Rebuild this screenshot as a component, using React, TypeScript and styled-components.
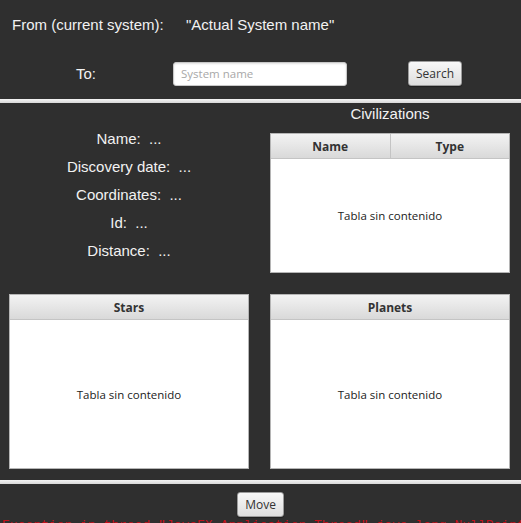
import React from "react";
import styled, { createGlobalStyle } from "styled-components";

const Global = createGlobalStyle`
  html, body { margin: 0; padding: 0; background: #2f2f2f; }
  #root { width: 521px; height: 523px; overflow: hidden; }
`;

const Window = styled.div`
  width: 521px;
  height: 523px;
  background: #2f2f2f;
  display: flex;
  flex-direction: column;
  overflow: hidden;
  font-family: "Liberation Sans", Arial, sans-serif;
  color: #f2f2f2;
  & > * { flex-shrink: 0; }
`;

const FromRow = styled.div`
  height: 48px;
  display: flex;
  align-items: center;
  padding-left: 12px;
  font-size: 15px;
`;

const FromLabel = styled.span`
  width: 174px;
`;

const ToRow = styled.div`
  height: 51px;
  display: flex;
  align-items: center;
  padding-left: 76px;
  font-size: 15px;
`;

const ToLabel = styled.span`
  width: 97px;
`;

const SearchInput = styled.input`
  box-sizing: border-box;
  width: 174px;
  height: 24px;
  border: 1px solid #c8c8c8;
  border-radius: 3px;
  background: #fff;
  box-shadow: inset 0 1px 2px rgba(0, 0, 0, 0.12);
  padding: 0 7px;
  font-family: "Open Sans", sans-serif;
  font-size: 11.5px;
  color: #333;
  outline: none;
  margin-right: 61px;
  &::placeholder { color: #a8a8a8; }
`;

const FxButton = styled.button`
  box-sizing: border-box;
  height: 25px;
  padding: 0 7px;
  border: 1px solid #9c9c9c;
  border-radius: 3px;
  background: linear-gradient(#f8f8f8, #dedede);
  box-shadow: 0 1px 1px rgba(0, 0, 0, 0.35);
  font-family: "Open Sans", sans-serif;
  font-size: 12px;
  color: #333;
  cursor: pointer;
`;

const Separator = styled.div`
  height: 4px;
  background: linear-gradient(#f4f4f4, #d8d8d8);
`;

const Main = styled.div`
  display: grid;
  grid-template-columns: 240px 240px;
  grid-template-rows: 191px 175px;
  column-gap: 21px;
  padding: 0 11px 11px 9px;
`;

const InfoList = styled.div`
  display: flex;
  flex-direction: column;
  align-items: center;
  padding-top: 22px;
  font-size: 15px;
`;

const InfoLine = styled.div`
  height: 28px;
  line-height: 28px;
  white-space: pre;
`;

const CivCell = styled.div`
  display: flex;
  flex-direction: column;
`;

const CivTitle = styled.div`
  height: 30px;
  line-height: 22px;
  text-align: center;
  font-size: 15px;
`;

const Table = styled.div<{ $h?: number }>`
  box-sizing: border-box;
  height: ${(p) => (p.$h ? `${p.$h}px` : "100%")};
  background: #fff;
  border: 1px solid #b5b5b5;
  display: flex;
  flex-direction: column;
  font-family: "Open Sans", sans-serif;
  color: #333;
`;

const HeaderRow = styled.div`
  display: flex;
  height: 24px;
  flex-shrink: 0;
  background: linear-gradient(#f3f3f3, #d9d9d9);
  border-bottom: 1px solid #c4c4c4;
`;

const HeaderCell = styled.div`
  flex: 1;
  display: flex;
  align-items: center;
  justify-content: center;
  font-size: 12px;
  font-weight: 700;
  color: #333;
  & + & { border-left: 1px solid #c4c4c4; }
`;

const Empty = styled.div`
  flex: 1;
  display: flex;
  align-items: center;
  justify-content: center;
  font-size: 11.5px;
  color: #222;
`;

const Footer = styled.div`
  display: flex;
  justify-content: center;
  padding-top: 8px;
  height: 26px;
`;

const Console = styled.div`
  font-family: "Liberation Mono", monospace;
  font-size: 13px;
  line-height: 15px;
  color: #c4101a;
  white-space: pre;
  padding-left: 2px;
`;

function DataTable({ columns, h }: { columns: string[]; h?: number }) {
  return (
    <Table $h={h}>
      <HeaderRow>
        {columns.map((c) => (
          <HeaderCell key={c}>{c}</HeaderCell>
        ))}
      </HeaderRow>
      <Empty>Tabla sin contenido</Empty>
    </Table>
  );
}

const info = ["Name:  ...", "Discovery date:  ...", "Coordinates:  ...", "Id:  ...", "Distance:  ..."];

export default function App() {
  return (
    <Window>
      <Global />
      <FromRow>
        <FromLabel>From (current system):</FromLabel>
        <span>"Actual System name"</span>
      </FromRow>
      <ToRow>
        <ToLabel>To:</ToLabel>
        <SearchInput placeholder="System name" />
        <FxButton>Search</FxButton>
      </ToRow>
      <Separator />
      <Main>
        <InfoList>
          {info.map((t) => (
            <InfoLine key={t}>{t}</InfoLine>
          ))}
        </InfoList>
        <CivCell>
          <CivTitle>Civilizations</CivTitle>
          <DataTable columns={["Name", "Type"]} h={140} />
        </CivCell>
        <DataTable columns={["Stars"]} />
        <DataTable columns={["Planets"]} />
      </Main>
      <Separator />
      <Footer>
        <FxButton>Move</FxButton>
      </Footer>
      <Console>
        Exception in thread "JavaFX Application Thread" java.lang.NullPointerException at
      </Console>
    </Window>
  );
}
